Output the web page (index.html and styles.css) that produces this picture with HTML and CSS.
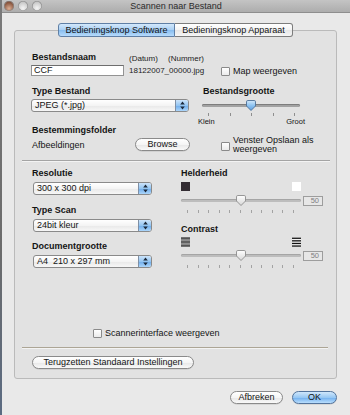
FILE: index.html
```html
<!DOCTYPE html>
<html lang="nl">
<head>
<meta charset="utf-8">
<title>Scannen naar Bestand</title>
<link rel="stylesheet" href="styles.css">
</head>
<body>
<div class="screen">
  <div class="edge"></div>
  <div class="window">
    <div class="titlebar">
      <div class="lights"><span class="light close"></span><span class="light"></span><span class="light"></span></div>
      <div class="title">Scannen naar Bestand</div>
      <div></div>
    </div>
    <div class="content">
      <div class="tabs">
        <span class="tab selected">Bedieningsknop Software</span>
        <span class="tab">Bedieningsknop Apparaat</span>
      </div>
      <div class="groupbox">
        <div class="sec1">
          <div class="row1">
            <div class="c-name">
              <div class="label">Bestandsnaam</div>
              <div class="textfield">CCF</div>
            </div>
            <div class="c-file">
              <div class="small"><span class="datum">(Datum)</span><span>(Nummer)</span></div>
              <div class="small file">18122007_00000.jpg</div>
            </div>
            <div class="c-map">
              <div class="check"><span class="box"></span><span>Map weergeven</span></div>
            </div>
          </div>
          <div class="row2">
            <div class="c-type">
              <div class="label">Type Bestand</div>
              <div class="popup w-type"><span class="ptext">JPEG (*.jpg)</span><span class="parrow"><svg width="5" height="9" viewBox="0 0 5 9"><path d="M2.5 0.5 L4.8 3.4 H0.2 Z M0.2 5.6 H4.8 L2.5 8.5 Z" fill="#1d2a3a"/></svg></span></div>
              <div class="label folder-label">Bestemmingsfolder</div>
              <div class="folder-row"><span class="ftext">Afbeeldingen</span><span class="button browse">Browse</span></div>
            </div>
            <div class="c-size">
              <div class="label">Bestandsgrootte</div>
              <div class="slider size">
                <div class="track"></div>
                <svg class="knob" width="10" height="11" viewBox="0 0 10 11">
                  <defs><linearGradient id="kb" x1="0" y1="0" x2="0" y2="1"><stop offset="0" stop-color="#d2e8fb"/><stop offset="0.5" stop-color="#8ec3f1"/><stop offset="1" stop-color="#5d9de0"/></linearGradient></defs>
                  <path d="M1.8 0.5 H8.2 Q9.5 0.5 9.5 1.8 V6 L5 10.5 L0.5 6 V1.8 Q0.5 0.5 1.8 0.5 Z" fill="url(#kb)" stroke="#4d6f96" stroke-width="0.9"/>
                </svg>
              </div>
              <div class="ticks t5"><i></i><i></i><i></i><i></i><i></i></div>
              <div class="scale"><span>Klein</span><span>Groot</span></div>
              <div class="check two"><span class="box"></span><span>Venster Opslaan als<br>weergeven</span></div>
            </div>
          </div>
        </div>
        <div class="separator"></div>
        <div class="sec2">
          <div class="c-scan">
            <div class="group">
              <div class="label">Resolutie</div>
              <div class="popup"><span class="ptext">300 x 300 dpi</span><span class="parrow"><svg width="5" height="9" viewBox="0 0 5 9"><path d="M2.5 0.5 L4.8 3.4 H0.2 Z M0.2 5.6 H4.8 L2.5 8.5 Z" fill="#1d2a3a"/></svg></span></div>
            </div>
            <div class="group">
              <div class="label">Type Scan</div>
              <div class="popup"><span class="ptext">24bit kleur</span><span class="parrow"><svg width="5" height="9" viewBox="0 0 5 9"><path d="M2.5 0.5 L4.8 3.4 H0.2 Z M0.2 5.6 H4.8 L2.5 8.5 Z" fill="#1d2a3a"/></svg></span></div>
            </div>
            <div class="group">
              <div class="label">Documentgrootte</div>
              <div class="popup"><span class="ptext">A4&nbsp; 210 x 297 mm</span><span class="parrow"><svg width="5" height="9" viewBox="0 0 5 9"><path d="M2.5 0.5 L4.8 3.4 H0.2 Z M0.2 5.6 H4.8 L2.5 8.5 Z" fill="#1d2a3a"/></svg></span></div>
            </div>
          </div>
          <div class="c-bright">
            <div class="label">Helderheid</div>
            <div class="ends"><span class="sq black"></span><span class="sq white"></span></div>
            <div class="vslider">
              <div class="slider wide">
                <div class="track light-track"></div>
                <svg class="knob" width="10" height="11" viewBox="0 0 10 11">
                  <defs><linearGradient id="kw" x1="0" y1="0" x2="0" y2="1"><stop offset="0" stop-color="#ffffff"/><stop offset="1" stop-color="#d6d6d6"/></linearGradient></defs>
                  <path d="M1.8 0.5 H8.2 Q9.5 0.5 9.5 1.8 V6 L5 10.5 L0.5 6 V1.8 Q0.5 0.5 1.8 0.5 Z" fill="url(#kw)" stroke="#8c8c8c" stroke-width="0.9"/>
                </svg>
              </div>
              <div class="num">50</div>
            </div>
            <div class="ticks t11"><i></i><i></i><i></i><i></i><i></i><i></i><i></i><i></i><i></i><i></i><i></i></div>
            <div class="label contrast-label">Contrast</div>
            <div class="ends icons">
              <svg width="9" height="10" viewBox="0 0 9 10"><rect x="0" y="0" width="9" height="10" fill="#8e8e8e"/><rect x="0" y="0.5" width="9" height="1.6" fill="#555"/><rect x="0" y="4.2" width="9" height="1.6" fill="#555"/><rect x="0" y="7.9" width="9" height="1.6" fill="#555"/></svg>
              <svg width="9" height="10" viewBox="0 0 9 10"><rect x="0" y="0" width="9" height="10" fill="#f4f4f4"/><rect x="0" y="0.6" width="9" height="1.3" fill="#111"/><rect x="0" y="3.2" width="9" height="1.3" fill="#111"/><rect x="0" y="5.8" width="9" height="1.3" fill="#111"/><rect x="0" y="8.4" width="9" height="1.3" fill="#111"/></svg>
            </div>
            <div class="vslider second">
              <div class="slider wide">
                <div class="track light-track"></div>
                <svg class="knob" width="10" height="11" viewBox="0 0 10 11">
                  <path d="M1.8 0.5 H8.2 Q9.5 0.5 9.5 1.8 V6 L5 10.5 L0.5 6 V1.8 Q0.5 0.5 1.8 0.5 Z" fill="url(#kw)" stroke="#8c8c8c" stroke-width="0.9"/>
                </svg>
              </div>
              <div class="num">50</div>
            </div>
            <div class="ticks t11"><i></i><i></i><i></i><i></i><i></i><i></i><i></i><i></i><i></i><i></i><i></i></div>
          </div>
        </div>
        <div class="spacer"></div>
        <div class="sec3">
          <div class="check scanner"><span class="box"></span><span>Scannerinterface weergeven</span></div>
          <div class="separator brown"></div>
          <span class="button reset">Terugzetten Standaard Instellingen</span>
        </div>
      </div>
      <div class="actions">
        <span class="button cancel">Afbreken</span>
        <span class="button ok">OK</span>
      </div>
    </div>
  </div>
</div>
</body>
</html>
```

FILE: styles.css
```css
* { box-sizing: border-box; margin: 0; padding: 0; }
html, body { width: 350px; height: 415px; overflow: hidden; }
body {
  font-family: "Liberation Sans", Arial, sans-serif;
  font-size: 9px;
  color: #141414;
  background: #e9e9e9;
}
.screen { display: flex; height: 415px; }
.edge { width: 2px; background: linear-gradient(#7a7a7a, #6c6c6c 60%, #5b6b82); }
.window { flex: 1; display: flex; flex-direction: column; background: #e9e9e9; }

/* title bar */
.titlebar {
  height: 13px;
  border-bottom: 1px solid #8e8e8e;
  background: linear-gradient(#c4c4c4, #adadad);
  display: grid;
  grid-template-columns: 1fr auto 1fr;
  align-items: start;
}
.lights { display: flex; gap: 4px; padding: 1px 0 0 2px; }
.light {
  width: 10px; height: 10px; border-radius: 50%;
  background: radial-gradient(circle at 50% 72%, #f4f4f4, #cdcdcd 60%, #a8a8a8);
  box-shadow: inset 0 0 0 0.6px #8a8a8a;
}
.light.close { background: radial-gradient(circle at 50% 75%, #dcae94, #8e5b43 60%, #66392a); }
.title { line-height: 12px; color: #2b2b2b; white-space: nowrap; }

/* content */
.content { flex: 1; display: flex; flex-direction: column; padding: 10px 13px 0 12px; }
.tabs { display: flex; justify-content: center; position: relative; z-index: 1; height: 14px; }
.tab {
  height: 14px; line-height: 12px; text-align: center; white-space: nowrap;
  border: 1px solid #7c7c7c;
  background: linear-gradient(#ffffff, #f3f3f3 50%, #e6e6e6 51%, #f6f6f6);
}
.tab:first-child { width: 117px; border-radius: 3px 0 0 3px; }
.tab:last-child { width: 118px; border-left: none; border-radius: 0 3px 3px 0; }
.tab.selected {
  border-color: #5f7fa5;
  background: linear-gradient(#d3e8fb, #a9cff4 50%, #86bcef 51%, #b7dbfc);
}

.groupbox {
  margin-top: -7px;
  height: 349px;
  border: 1px solid #bababa;
  border-radius: 3px;
  background: #e2e2e2;
  display: flex;
  flex-direction: column;
}
.label { font-weight: bold; line-height: 11px; height: 11px; padding-left: 1px; white-space: nowrap; }

/* section 1 */
.sec1 { padding: 21px 0 0 16px; }
.row1 { display: flex; }
.c-name { width: 98px; }
.textfield {
  margin-top: 2px; width: 93px; height: 11px; line-height: 9px; padding-left: 2px;
  background: #fff; border: 1px solid #939393; border-top-color: #6e6e6e;
}
.c-file { width: 92px; padding-top: 2px; }
.small { font-size: 8px; line-height: 10px; white-space: nowrap; color: #222; }
.datum { display: inline-block; width: 39px; }
.file { margin-top: 2px; }
.c-map { padding-top: 15px; }
.check { display: flex; align-items: center; gap: 3px; white-space: nowrap; line-height: 9px; }
.box {
  flex: none; width: 9px; height: 9px;
  border: 1px solid #8a8a8a; border-radius: 1px;
  background: linear-gradient(#ffffff, #ebebeb);
}

.row2 { display: flex; margin-top: 10px; }
.c-type { width: 171px; }
.popup {
  display: flex; height: 13px; margin-top: 2px; width: 158px;
  border: 1px solid #8a8a8a; border-radius: 3px; overflow: hidden;
  background: linear-gradient(#ffffff, #f4f4f4 50%, #e8e8e8 51%, #f7f7f7);
}
.ptext { flex: 1; line-height: 11px; padding-left: 3px; white-space: nowrap; }
.parrow {
  width: 13px; display: flex; align-items: center; justify-content: center;
  border-left: 1px solid #7e8fa5;
  background: linear-gradient(#cde4fa, #93c5f2 50%, #6dabea 51%, #acd6fb);
}
.folder-label { margin-top: 13px; }
.folder-row { display: flex; justify-content: space-between; align-items: center; width: 159px; height: 13px; margin-top: 2px; }
.ftext { padding-left: 1px; }
.button {
  display: inline-block; height: 13px; line-height: 11px; text-align: center; white-space: nowrap;
  border: 1px solid #8a8a8a; border-radius: 7px;
  background: linear-gradient(#ffffff, #f5f5f5 50%, #e7e7e7 51%, #f9f9f9);
  box-shadow: 0 0.5px 0.5px rgba(0, 0, 0, 0.15);
}
.browse { width: 55px; }

.c-size { width: 128px; }
.slider { display: grid; height: 11px; width: 98px; margin-top: 3px; }
.slider > * { grid-area: 1 / 1; }
.track { align-self: center; height: 3px; border-radius: 2px; background: #a2a2a2; box-shadow: inset 0 1px 0 #7d7d7d; }
.light-track { background: #bdbdbd; box-shadow: inset 0 1px 0 #a5a5a5; }
.knob { justify-self: center; }
.ticks { display: flex; justify-content: space-between; height: 3px; margin-top: 2px; }
.ticks i { width: 1px; background: #8e8e8e; }
.t5 { width: 98px; padding: 0 5px 0 6px; }
.scale { display: flex; justify-content: space-between; width: 107px; margin: 2px 0 0 -4px; font-size: 7.5px; line-height: 8px; }
.check.two { margin-top: 10px; padding-left: 19px; align-items: flex-start; }
.check.two .box { margin-top: 6px; }

.separator { height: 2px; margin: 6px 6px 0 7px; border-top: 1px solid #a4a4a4; border-bottom: 1px solid #f3f3f3; }

/* section 2 */
.sec2 { display: flex; padding: 6px 0 0 16px; }
.c-scan { width: 150px; display: flex; flex-direction: column; gap: 9.5px; }
.c-scan .popup { width: 119px; margin: 3px 0 0 2px; }
.c-bright { width: 142px; }
.c-bright .label { padding-left: 0; }
.ends { display: flex; justify-content: space-between; width: 120px; height: 9px; margin-top: 3px; }
.sq { width: 9px; height: 9px; }
.sq.black { background: #332d33; }
.sq.white { background: #ffffff; }
.vslider { display: flex; align-items: center; gap: 2px; height: 11px; margin-top: 4px; }
.vslider.second { margin-top: 3px; }
.slider.wide { width: 120px; margin-top: 0; }
.num {
  width: 20px; height: 10px; padding-right: 3px;
  border: 1px solid #9d9d9d; background: #e7e7e7;
  font-size: 7.5px; line-height: 8px; text-align: right; color: #808080;
}
.t11 { width: 120px; padding: 0 7px 0 6px; margin-top: 4px; }
.t11 i { background: #a3a3a3; }
.contrast-label { margin-top: 11px; }
.ends.icons { height: 10px; margin-top: 2px; }

/* section 3 */
.spacer { flex: 1; }
.sec3 { padding-bottom: 9px; }
.check.scanner { padding-left: 78px; }
.separator.brown { margin: 9px 8px 0 7px; border-top-color: #aca595; }
.reset { margin: 7px 0 0 17px; width: 162px; }

/* dialog buttons */
.actions { display: flex; justify-content: flex-end; gap: 9px; margin-top: 12px; }
.cancel { width: 53px; }
.ok {
  width: 45px;
  border-color: #52739b;
  background: linear-gradient(#d0e7fb, #97c8f3 50%, #6faeee 51%, #b9defd);
}
```
